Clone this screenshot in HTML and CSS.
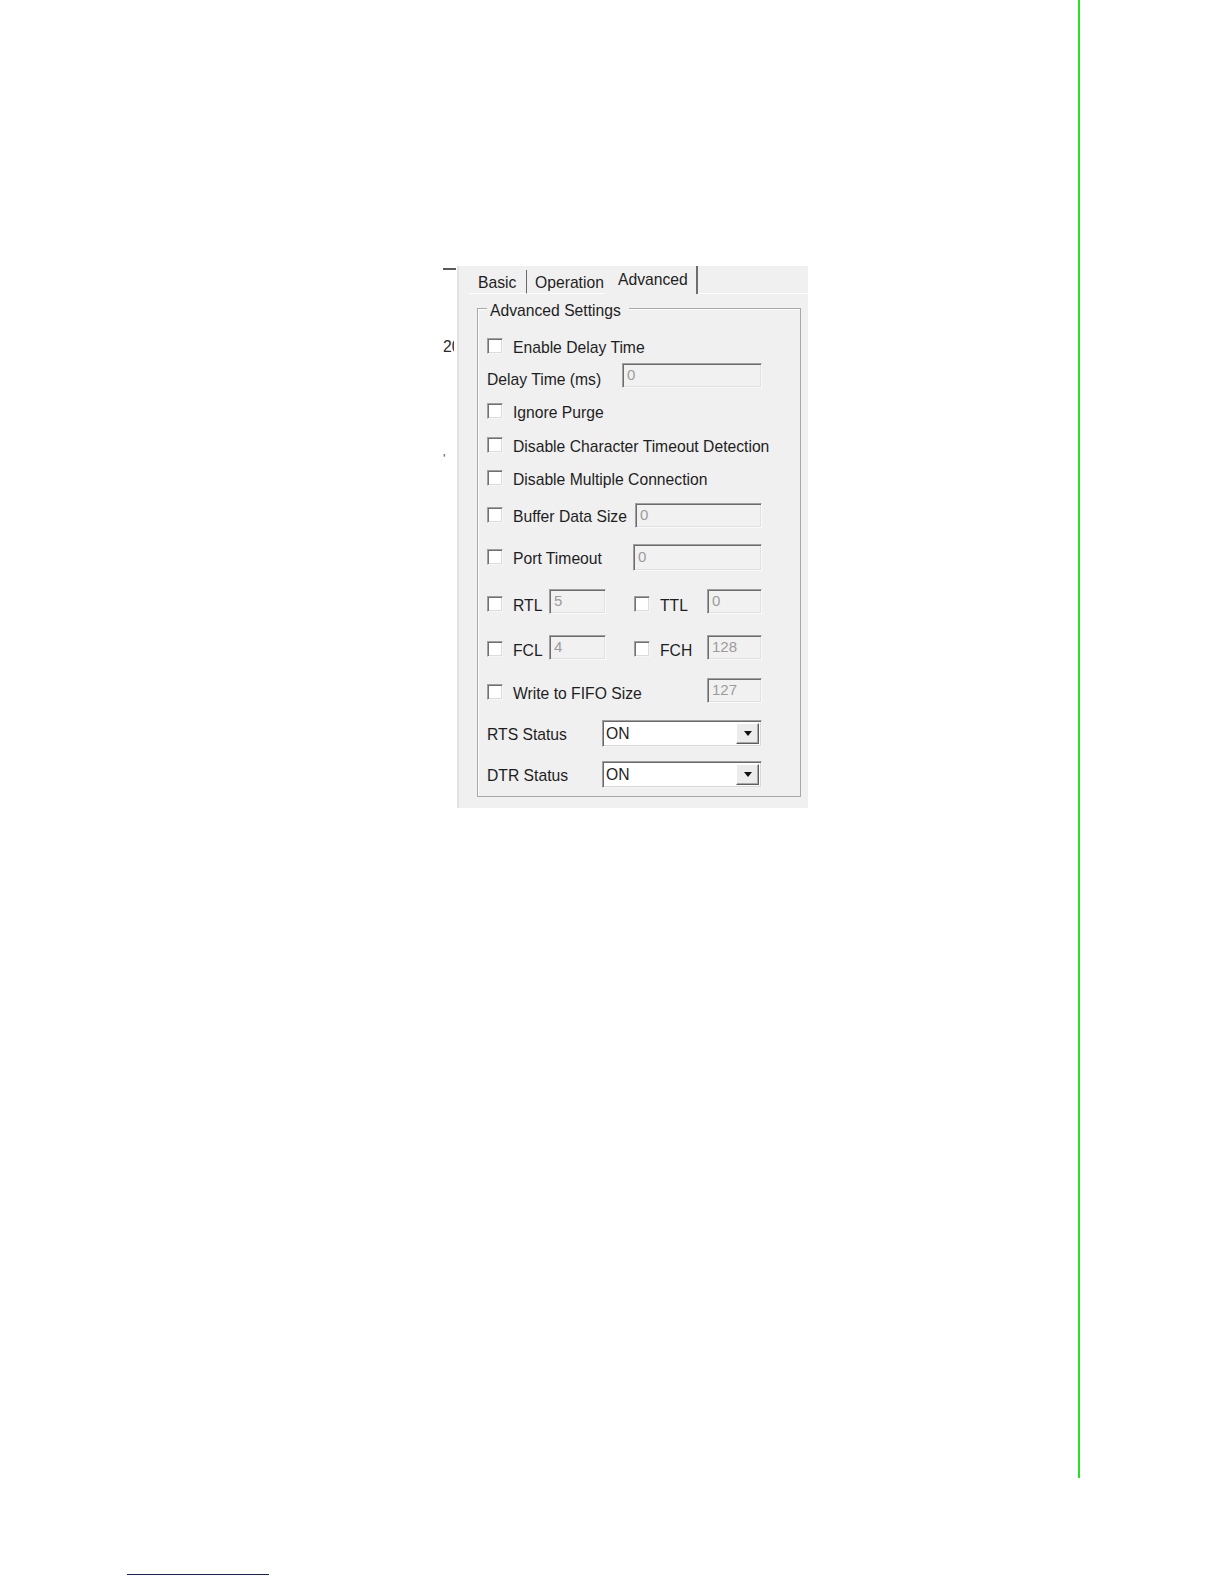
FILE: index.html
```html
<!DOCTYPE html>
<html lang="en">
<head>
<meta charset="utf-8">
<title>Advanced Settings</title>
<link rel="stylesheet" href="styles.css">
</head>
<body>
<div class="page">
  <div class="main">
    <div class="figure">
      <div class="strip">
        <div class="strip-line"></div>
        <div class="strip-text t20">20</div>
        <div class="strip-text tick">'</div>
      </div>
      <div class="dialog">
        <div class="tabs">
          <div class="tab tab-basic">Basic</div>
          <div class="tab tab-op">Operation</div>
          <div class="tab tab-adv">Advanced</div>
          <div class="tab-rest"></div>
        </div>
        <div class="panel">
          <div class="group">
            <div class="group-title">Advanced Settings</div>

            <div class="row mt14">
              <span class="cb"></span><span class="lbl">Enable Delay Time</span>
            </div>
            <div class="row mt3">
              <span class="lbl lbl-low">Delay Time (ms)</span>
              <span class="edit w140">0</span>
            </div>
            <div class="row mt10">
              <span class="cb"></span><span class="lbl">Ignore Purge</span>
            </div>
            <div class="row mt8">
              <span class="cb"></span><span class="lbl">Disable Character Timeout Detection</span>
            </div>
            <div class="row mt7">
              <span class="cb"></span><span class="lbl">Disable Multiple Connection</span>
            </div>
            <div class="row mt11">
              <span class="cb"></span><span class="lbl">Buffer Data Size</span>
              <span class="edit w127">0</span>
            </div>
            <div class="row mt16">
              <span class="cb"></span><span class="lbl">Port Timeout</span>
              <span class="edit w129 tall">0</span>
            </div>
            <div class="row mt18">
              <div class="half">
                <span class="cb drop"></span><span class="lbl lbl-s drop">RTL</span>
                <span class="edit w57 short">5</span>
              </div>
              <div class="half-r">
                <span class="cb drop"></span><span class="lbl drop">TTL</span>
                <span class="edit w55 short">0</span>
              </div>
            </div>
            <div class="row mt20">
              <div class="half">
                <span class="cb drop-s"></span><span class="lbl lbl-s drop-s">FCL</span>
                <span class="edit w57">4</span>
              </div>
              <div class="half-r">
                <span class="cb drop-s"></span><span class="lbl drop-s">FCH</span>
                <span class="edit w55">128</span>
              </div>
            </div>
            <div class="row mt17">
              <span class="cb drop-s"></span><span class="lbl drop-s">Write to FIFO Size</span>
              <span class="edit w55">127</span>
            </div>
            <div class="row mt17">
              <span class="lbl">RTS Status</span>
              <span class="combo"><span class="combo-val">ON</span><span class="combo-btn"><span class="arrow"></span></span></span>
            </div>
            <div class="row mt15">
              <span class="lbl">DTR Status</span>
              <span class="combo"><span class="combo-val">ON</span><span class="combo-btn"><span class="arrow"></span></span></span>
            </div>
          </div>
        </div>
      </div>
    </div>
    <div class="foot-rule"></div>
  </div>
  <div class="side-rule"></div>
</div>
</body>
</html>
```

FILE: styles.css
```css
html, body {
  margin: 0;
  padding: 0;
  background: #ffffff;
}

body {
  font-family: "Liberation Sans", Arial, sans-serif;
  font-size: 15.7px;
  color: #1e1e1e;
}

.page {
  display: flex;
  width: 1224px;
  height: 1584px;
  overflow: hidden;
}

.main {
  width: 1078px;
  display: flex;
  flex-direction: column;
}

.side-rule {
  width: 2px;
  height: 1478px;
  background: #22e522;
}

.foot-rule {
  margin-top: auto;
  margin-left: 127px;
  margin-bottom: 9px;
  width: 142px;
  height: 1.5px;
  background: #1a1a8c;
}

/* figure */
.figure {
  margin-top: 266px;
  margin-left: 443px;
  display: flex;
}

.strip {
  width: 14px;
  display: flex;
  flex-direction: column;
}

.strip-line {
  margin-top: 2px;
  width: 13px;
  height: 1.5px;
  background: #5a5a5a;
}

.strip-text {
  width: 11px;
  overflow: hidden;
  white-space: nowrap;
  line-height: 18px;
  height: 18px;
}

.t20 {
  margin-top: 68px;
  color: #2a2a2a;
}

.tick {
  margin-top: 94px;
  font-size: 13px;
  color: #555;
}

/* dialog */
.dialog {
  width: 351px;
  height: 542px;
  box-sizing: border-box;
  background: #f0f0f0;
  border-left: 2px solid #e2e2e2;
  display: flex;
  flex-direction: column;
}

.tabs {
  height: 28px;
  display: flex;
  align-items: flex-end;
  padding-left: 10px;
}

.tab {
  box-sizing: border-box;
  white-space: nowrap;
}

.tab-basic {
  width: 58px;
  height: 24px;
  line-height: 26px;
  padding-left: 9px;
  border-right: 1.5px solid #6a6a6a;
  border-bottom: 1px solid #ffffff;
}

.tab-op {
  width: 78px;
  height: 24px;
  line-height: 26px;
  padding-left: 8px;
  border-bottom: 1px solid #ffffff;
}

.tab-adv {
  width: 93px;
  height: 28px;
  line-height: 27px;
  padding-left: 13px;
  border-right: 2px solid #6e6e6e;
}

.tab-rest {
  flex: 1;
  height: 1px;
  background: #ffffff;
}

.panel {
  flex: 1;
  padding-left: 18px;
  display: flex;
  flex-direction: column;
}

.group {
  margin-top: 14px;
  width: 324px;
  height: 489px;
  box-sizing: border-box;
  border: 1px solid #a8a8a8;
  box-shadow: inset 1px 1px 0 #ffffff;
  padding-left: 9px;
  display: flex;
  flex-direction: column;
}

.group-title {
  align-self: flex-start;
  margin-top: -9px;
  height: 16px;
  line-height: 16px;
  padding: 3px 8px 0 3px;
  background: linear-gradient(#f0f0f0, #f0f0f0) 0 0 / 100% 100% no-repeat;
  white-space: nowrap;
}

/* rows */
.row {
  width: 275px;
  height: 26px;
  display: flex;
  align-items: center;
  flex-shrink: 0;
}

.mt3 { margin-top: 3px; }
.mt7 { margin-top: 7px; }
.mt8 { margin-top: 8px; }
.mt10 { margin-top: 10px; }
.mt11 { margin-top: 11px; }
.mt14 { margin-top: 14px; }
.mt15 { margin-top: 15px; }
.mt16 { margin-top: 16px; }
.mt17 { margin-top: 17px; }
.mt18 { margin-top: 18px; }
.mt20 { margin-top: 20px; }

.cb {
  flex-shrink: 0;
  width: 16px;
  height: 16px;
  box-sizing: border-box;
  background: #ffffff;
  border: 1px solid;
  border-color: #a0a0a0 #f6f6f6 #f6f6f6 #a0a0a0;
  box-shadow: inset 1px 1px 0 #707070, inset -1px -1px 0 #dcdcdc;
  margin-right: 10px;
}

.lbl {
  white-space: nowrap;
  line-height: 18px;
  padding-top: 3px;
}

.lbl-low {
  padding-top: 10px;
}

.drop {
  margin-top: 6px;
}

.drop-s {
  margin-top: 4px;
}

.lbl-s {
  width: 36px;
}

.half {
  width: 147px;
  display: flex;
  align-items: center;
}

.half-r {
  flex: 1;
  display: flex;
  align-items: center;
}

.edit {
  margin-left: auto;
  height: 25px;
  box-sizing: border-box;
  background: #f1f1f1;
  border: 1px solid;
  border-color: #a0a0a0 #fafafa #fafafa #a0a0a0;
  box-shadow: inset 1px 1px 0 #6c6c6c, inset -1px -1px 0 #e0e0e0;
  color: #9c9c9c;
  padding-left: 4px;
  line-height: 22px;
  font-size: 15px;
}

.half .edit {
  margin-left: 0;
}

.tall { height: 27px; line-height: 24px; }
.short { height: 25px; line-height: 22px; }

.w140 { width: 140px; }
.w127 { width: 127px; }
.w129 { width: 129px; }
.w57 { width: 57px; }
.w55 { width: 55px; }

.combo {
  margin-left: auto;
  width: 160px;
  height: 27px;
  box-sizing: border-box;
  background: #ffffff;
  border: 1px solid;
  border-color: #a0a0a0 #f4f4f4 #f4f4f4 #a0a0a0;
  box-shadow: inset 1px 1px 0 #6a6a6a, inset -1px -1px 0 #d8d8d8;
  display: flex;
  align-items: stretch;
  padding: 2px 2px 2px 0;
}

.combo-val {
  flex: 1;
  padding-left: 3px;
  line-height: 21px;
  color: #1e1e1e;
}

.combo-btn {
  width: 23px;
  box-sizing: border-box;
  background: #ececec;
  border: 1px solid;
  border-color: #ffffff #5e5e5e #5e5e5e #ffffff;
  box-shadow: inset -1px -1px 0 #a8a8a8;
  display: flex;
  align-items: center;
  justify-content: center;
}

.arrow {
  width: 0;
  height: 0;
  border-left: 4.5px solid transparent;
  border-right: 4.5px solid transparent;
  border-top: 5px solid #111111;
  margin-top: 1px;
}
```
